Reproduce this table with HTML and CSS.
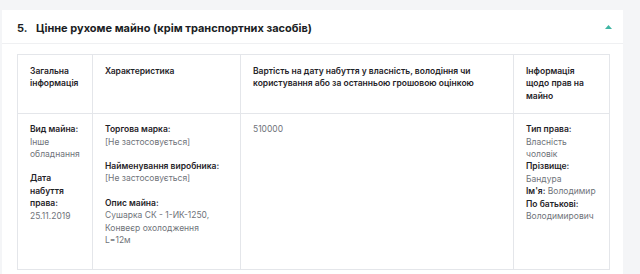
FILE: index.html
```html
<!DOCTYPE html>
<html lang="uk">
<head>
<meta charset="utf-8">
<link rel="stylesheet" href="styles.css">
</head>
<body>
<div class="page">
  <section class="card">
    <header class="card-head">
      <h2 class="title"><span class="num">5.</span>Цінне рухоме майно (крім транспортних засобів)</h2>
      <svg class="caret" width="7" height="4" viewBox="0 0 7 4"><path d="M0 4 L3.5 0 L7 4 Z" fill="#3fb5a3"/></svg>
    </header>
    <div class="card-body">
      <table class="grid">
        <colgroup>
          <col class="c1"><col class="c2"><col class="c3"><col class="c4">
        </colgroup>
        <thead>
          <tr>
            <th>Загальна інформація</th>
            <th>Характеристика</th>
            <th>Вартість на дату набуття у власність, володіння чи користування або за останньою грошовою оцінкою</th>
            <th>Інформація щодо прав на майно</th>
          </tr>
        </thead>
        <tbody>
          <tr>
            <td>
              <div class="group"><b>Вид майна:</b><span class="val">Інше обладнання</span></div>
              <div class="group"><b>Дата набуття права:</b><span class="val">25.11.2019</span></div>
            </td>
            <td class="wide-pad">
              <div class="group"><b>Торгова марка:</b><span class="val">[Не застосовується]</span></div>
              <div class="group"><b>Найменування виробника:</b><span class="val">[Не застосовується]</span></div>
              <div class="group"><b>Опис майна:</b><span class="val">Сушарка СК - 1-ИК-1250, Конвеєр охолодження L=12м</span></div>
            </td>
            <td><span class="val">510000</span></td>
            <td>
              <b>Тип права:</b><span class="val">Власність чоловік</span>
              <b>Прізвище:</b><span class="val">Бандура</span>
              <span class="line"><b>Ім'я:</b> <span class="val inl">Володимир</span></span>
              <b>По батькові:</b><span class="val">Володимирович</span>
            </td>
          </tr>
        </tbody>
      </table>
    </div>
  </section>
</div>
</body>
</html>
```
FILE: styles.css
```css
html, body {
  margin: 0;
  padding: 0;
  background: #f4f5f7;
  font-family: Inter, "Noto Sans", sans-serif;
}
.page {
  padding: 10px 17px 0 2px;
}
.card {
  background: #fff;
  height: 264px;
}
.card-head {
  height: 33px;
  border-bottom: 1px solid #eff0f2;
  display: flex;
  align-items: center;
  justify-content: space-between;
  padding: 0 11px 0 15px;
}
.title {
  margin: 2px 0 0 0;
  font-size: 11px;
  font-weight: 700;
  color: #1b1e24;
}
.num {
  display: inline-block;
  width: 19px;
}
.caret {
  display: block;
  margin-top: 1px;
}
.card-body {
  padding: 10px 15px 0 15px;
}
.grid {
  width: 592px;
  border-collapse: collapse;
  table-layout: fixed;
  font-size: 8.5px;
  color: #1f2328;
}
.c1 { width: 75px; }
.c2 { width: 148px; }
.c3 { width: 273px; }
.c4 { width: 96px; }
.grid th, .grid td {
  border: 1px solid #e4e6ea;
  vertical-align: top;
  text-align: left;
  padding: 10px 12px 11px 12px;
  line-height: 12.4px;
}
.grid th {
  font-weight: 600;
}
.grid td {
  padding-top: 9px;
  padding-bottom: 23px;
}
.grid td.wide-pad {
  padding-right: 16px;
}
.grid b {
  display: block;
  font-weight: 600;
}
.val {
  display: block;
  color: #6f737a;
}
.group + .group {
  margin-top: 12px;
}
.line {
  display: block;
}
.line b {
  display: inline;
}
.val.inl {
  display: inline;
}
```
